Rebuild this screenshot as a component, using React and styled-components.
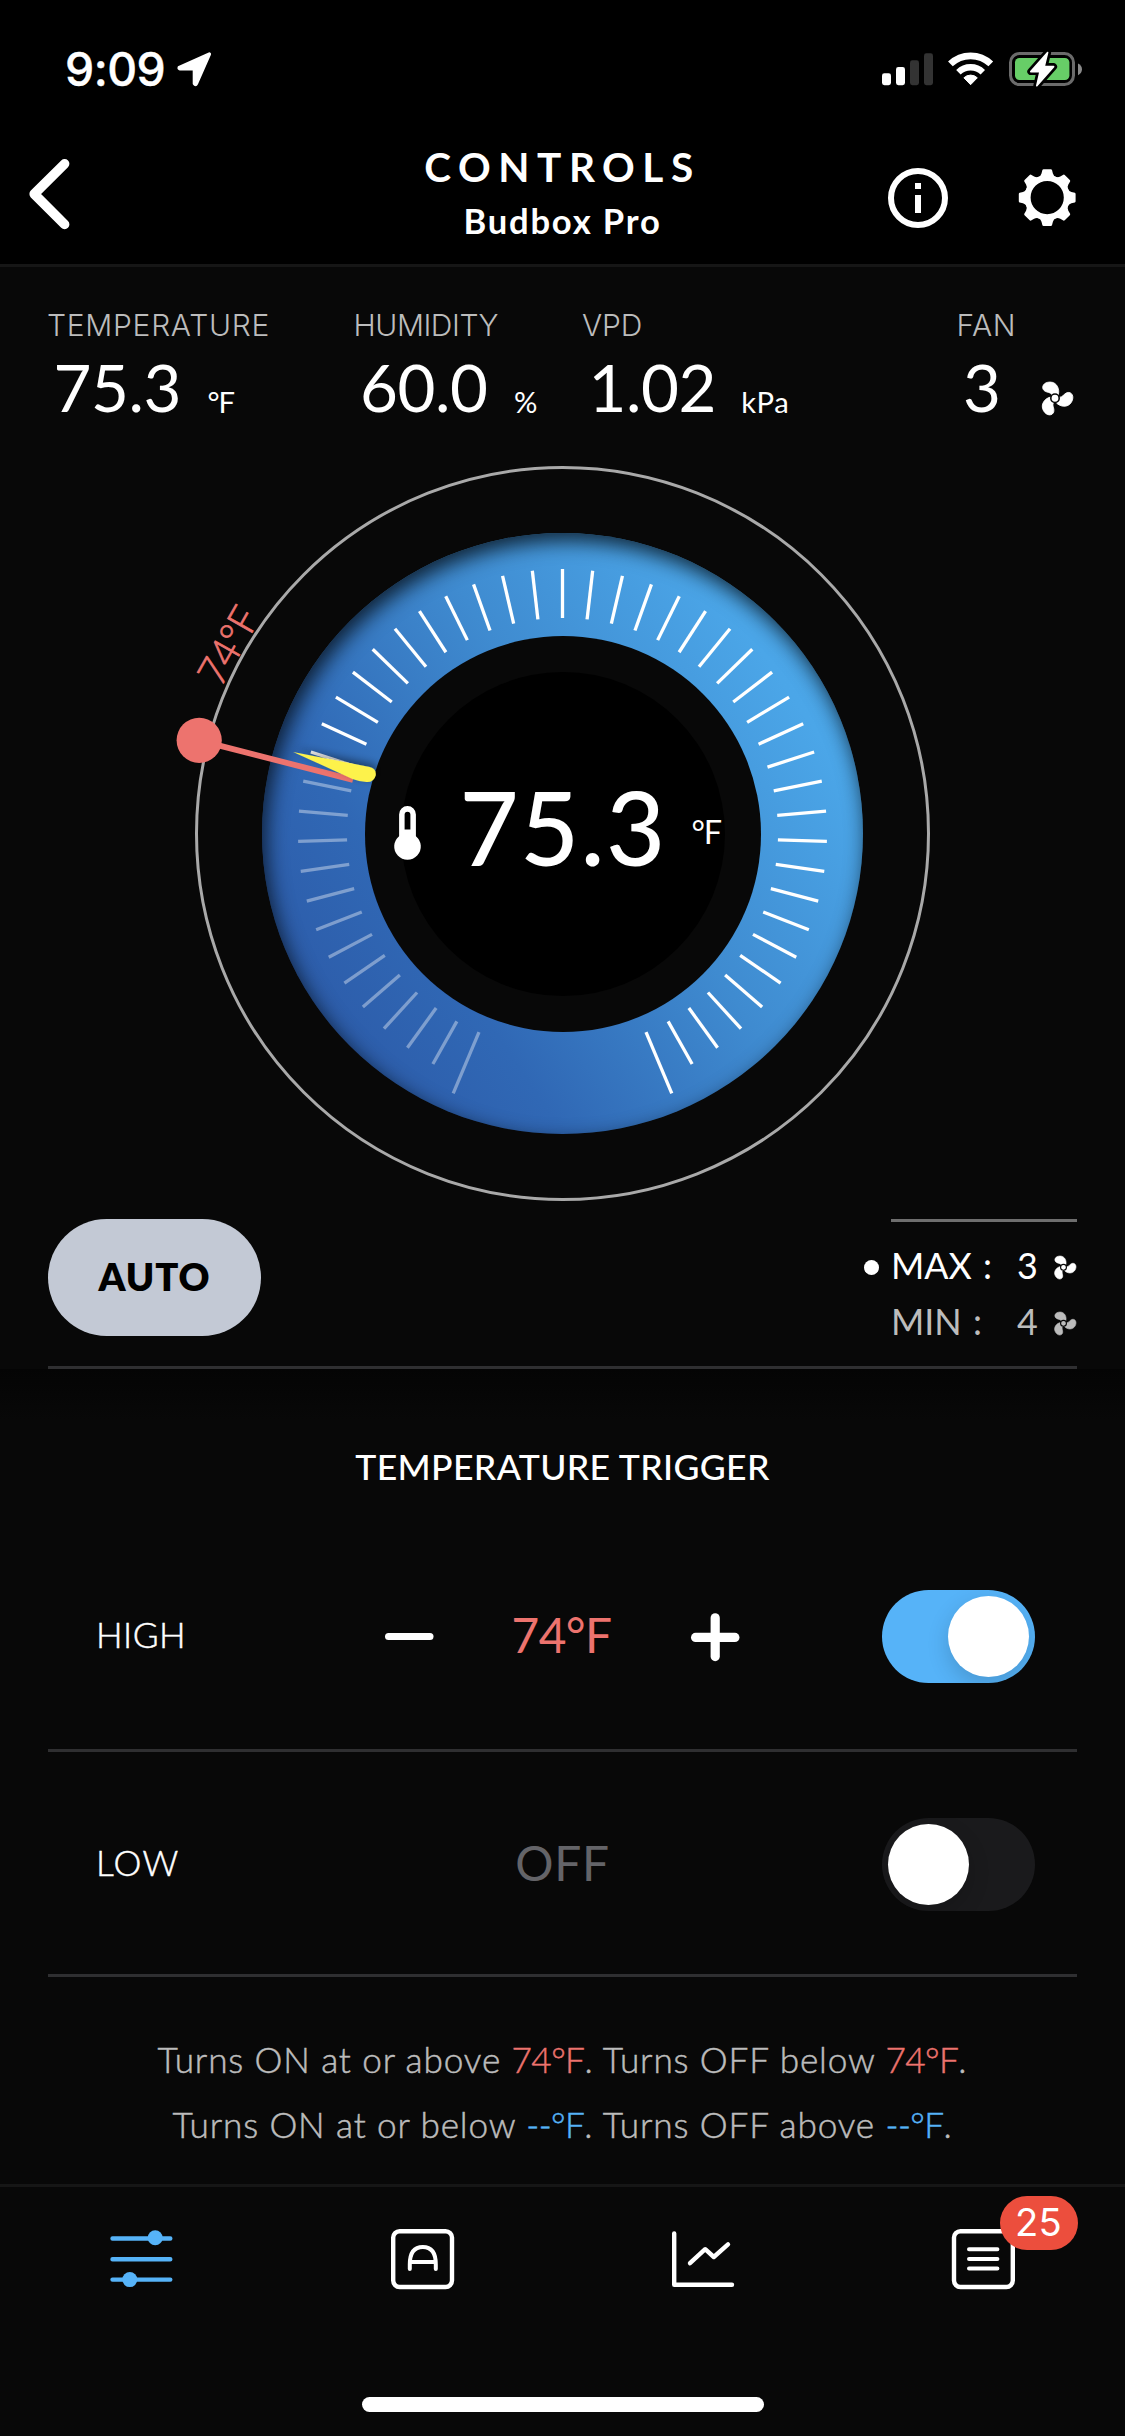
import React from 'react';
import styled, { createGlobalStyle } from 'styled-components';

const color = {
  page: '#080808',
  text: '#ffffff',
  muted: '#bcbcbc',
  dim: '#646468',
  line: '#2f2f31',
  hair: '#161616',
  blue: '#56b3f8',
  red: '#ed736e',
  yellow: '#fdf24b',
};

const GlobalStyle = createGlobalStyle`
  * { box-sizing: border-box; }
  body {
    margin: 0;
    background: ${color.page};
    color: ${color.text};
    font-family: Lato, "Liberation Sans", sans-serif;
  }
`;

const Screen = styled.div`
  width: 1125px;
  height: 2436px;
  display: flex;
  flex-direction: column;
  background: ${color.page};
  overflow: hidden;
  white-space: nowrap;
`;

const Svg = styled.svg`
  display: block;
  flex: none;
  overflow: visible;
`;

/* ---------- status bar ---------- */

const StatusBar = styled.div`
  height: 138px;
  flex: none;
  display: flex;
  align-items: center;
  padding: 0 43px 0 65px;
  background: #000;
`;

const Clock = styled.span`
  font: 500 46.3px/60px Inter, sans-serif;
  letter-spacing: -0.5px;
  margin-right: 11.5px;
  -webkit-text-stroke: 0.4px currentColor;
`;

const StatusIcons = styled.div`
  margin-left: auto;
  display: flex;
  align-items: center;
  gap: 15px;
`;

const LocationArrow = () => (
  <Svg width="35" height="36" viewBox="0 0 35 36">
    <path d="M32.4 3 L2.2 16.6 Q1.8 17.6 3 17.8 H17.4 V32.6 Q18.6 34.4 19.4 32.6 Z" fill="#fff" stroke="#fff" strokeWidth="3.4" strokeLinejoin="round" />
  </Svg>
);

const Signal = () => (
  <Svg width="51.5" height="34" viewBox="0 0 51.5 34">
    <rect x="0" y="21.2" width="9" height="12" rx="2.4" fill="#fff" />
    <rect x="14" y="15" width="9" height="18.2" rx="2.4" fill="#fff" />
    <rect x="28" y="8.3" width="9" height="24.9" rx="2.4" fill="#333" />
    <rect x="42" y="1.3" width="9" height="31.9" rx="2.4" fill="#333" />
  </Svg>
);

const Wifi = () => (
  <Svg width="46" height="34" viewBox="0 0 46 34">
    <path d="M2.4 11.9 A29.2 29.2 0 0 1 42.8 11.9" fill="none" stroke="#fff" strokeWidth="6.8" />
    <path d="M10.4 20.2 A17.6 17.6 0 0 1 34.8 20.2" fill="none" stroke="#fff" strokeWidth="6.4" />
    <path d="M22.6 32.7 L15.9 25.8 Q18.5 23.2 22.6 23.1 Q26.7 23.2 29.3 25.8 Z" fill="#fff" stroke="#fff" strokeWidth="1" strokeLinejoin="round" />
  </Svg>
);

const Battery = () => (
  <Svg width="73" height="36" viewBox="0 0 73 36">
    <rect x="1.5" y="2.5" width="63" height="31" rx="9" fill="none" stroke="#6b6b6b" strokeWidth="3" />
    <path d="M69 12.4 Q73 14.4 73 18.3 Q73 22.2 69 24.2 Z" fill="#8a8a8a" />
    <rect x="6" y="7" width="54.4" height="22" rx="4.5" fill="#67ce67" />
    <path d="M38.6 1.6 L21.8 20.6 H31 L27.8 34.8 L44.6 15.6 H35.2 Z" fill="#000" stroke="#000" strokeWidth="7" strokeLinejoin="round" />
    <path d="M38.6 1.6 L21.8 20.6 H31 L27.8 34.8 L44.6 15.6 H35.2 Z" fill="#fff" stroke="#fff" strokeWidth="1.6" strokeLinejoin="round" />
  </Svg>
);

/* ---------- header ---------- */

const Header = styled.header`
  height: 129px;
  flex: none;
  display: grid;
  grid-template-columns: 1fr auto 1fr;
  align-items: start;
  padding: 0 48px 0 28px;
  background: #000;
  border-bottom: 3px solid ${color.hair};
`;

const BackButton = styled.div`
  padding-top: 20px;
`;

const TitleBlock = styled.div`
  padding-top: 2px;
  margin-left: 20px;
  text-align: center;
`;

const Title = styled.h1`
  margin: 0;
  font-size: 40.5px;
  font-weight: 700;
  line-height: 54px;
  letter-spacing: 7.56px;
`;

const Subtitle = styled.div`
  font-size: 34.6px;
  font-weight: 700;
  line-height: 54px;
  letter-spacing: 1.8px;
`;

const HeaderActions = styled.div`
  display: flex;
  justify-content: flex-end;
  gap: 69px;
  padding-top: 30px;
`;

const Back = () => (
  <Svg width="44" height="72" viewBox="0 0 44 72">
    <path d="M36.6 5.8 L6.2 36 L36.6 66.4" fill="none" stroke="#fff" strokeWidth="9.6" strokeLinecap="round" strokeLinejoin="round" />
  </Svg>
);

const Info = () => (
  <Svg width="60" height="60" viewBox="0 0 60 60">
    <circle cx="30" cy="30" r="27" fill="none" stroke="#fff" strokeWidth="6" />
    <rect x="27" y="15" width="6" height="6" fill="#fff" />
    <rect x="27" y="27" width="6" height="18" fill="#fff" />
  </Svg>
);

const TOOTH = 'M-9 -20.4 Q-6.4 -21.6 -5.7 -24.2 L-4.8 -27.6 Q-4.5 -28.4 -3.6 -28.4 H3.6 Q4.5 -28.4 4.8 -27.6 L5.7 -24.2 Q6.4 -21.6 9 -20.4 Z';

const Gear = () => (
  <Svg width="60" height="60" viewBox="-30.2 -29.6 60 60">
    <circle r="19.6" fill="none" stroke="#fff" strokeWidth="6" />
    {[0, 45, 90, 135, 180, 225, 270, 315].map((a) => (
      <path key={a} d={TOOTH} transform={`rotate(${a})`} fill="#fff" />
    ))}
  </Svg>
);

/* ---------- metrics ---------- */

const BLADE = 'M18.2 12.9 C20 8 17.4 0 10 0 C3.6 0 .8 5.2 4 8.4 C6.8 11 10.6 9.6 12.4 13.4 Q15.4 11.2 18.2 12.9 Z';

const Fan = ({ size = 35, tint = '#fff' }) => (
  <Svg width={size} height={size * 0.95} viewBox="0 0 35 33.2">
    {[0, 120, 240].map((a) => (
      <path key={a} d={BLADE} transform={`rotate(${a} 15 16.2)`} fill={tint} stroke={tint} strokeWidth="0.8" />
    ))}
    <circle cx="15" cy="16.2" r="4.2" fill={tint} stroke={color.page} strokeWidth="1.6" />
  </Svg>
);

const Metrics = styled.section`
  height: 199px;
  flex: none;
  display: grid;
  grid-template-columns: 306.5px 228.5px 374.5px 1fr;
  padding: 38px 0 0 47px;
`;

const MetricLabel = styled.div`
  font: 300 30px/40px Inter, sans-serif;
  letter-spacing: ${(p) => p.$spacing}px;
  color: ${color.muted};
`;

const MetricReading = styled.div`
  display: flex;
  align-items: flex-start;
  gap: ${(p) => p.$gap}px;
  padding: 2px 0 0 6.5px;
`;

const MetricValue = styled.span`
  font-size: 65.4px;
  line-height: 80px;
  letter-spacing: -0.4px;
`;

const MetricUnit = styled.span`
  font-size: 29.2px;
  line-height: 110px;
  letter-spacing: ${(p) => p.$spacing}px;
`;

const MetricIcon = styled.span`
  padding-top: 35px;
`;

const METRICS = [
  { label: 'TEMPERATURE', value: '75.3', unit: '°F', spacing: 0.7, unitSpacing: -1.2, gap: 26.4 },
  { label: 'HUMIDITY', value: '60.0', unit: '%', spacing: -0.45, unitSpacing: 0, gap: 26.4 },
  { label: 'VPD', value: '1.02', unit: 'kPa', spacing: -0.2, unitSpacing: 0.6, gap: 25 },
  { label: 'FAN', value: '3', spacing: 0.6, gap: 39.5 },
];

/* ---------- dial ---------- */

const Dial = styled.section`
  width: 735px;
  height: 735px;
  flex: none;
  align-self: center;
  margin-bottom: 18px;
  display: grid;
  grid-template: 100% / 100%;
  place-items: center;
  border: 3px solid #a9a9a9;
  border-radius: 50%;
  & > * { grid-area: 1 / 1; }
`;

const Disc = styled.div`
  width: 601px;
  height: 601px;
  border-radius: 50%;
  background: linear-gradient(56deg, #2c59a7 8%, #3068b5 30%, #3f8bd0 56%, #4ba6e8 82%, #4dabed 100%);
  box-shadow: inset 4px 8px 20px rgba(4, 10, 16, 0.8);
`;

const Hole = styled.div`
  width: 396px;
  height: 396px;
  border-radius: 50%;
  background: ${color.page};
  display: grid;
  place-items: center;
`;

const Core = styled.div`
  width: 324px;
  height: 324px;
  border-radius: 50%;
  background: #000;
`;

const Readout = styled.div`
  display: flex;
  align-items: center;
  padding-right: 10px;
`;

const ReadoutIcon = styled.span`
  padding-bottom: 2px;
  margin-right: 38.5px;
`;

const ReadoutValue = styled.span`
  font-size: 102px;
  font-weight: 500;
  line-height: 120px;
  letter-spacing: 1.4px;
  padding-bottom: 14px;
  margin-right: 25px;
`;

const ReadoutUnit = styled.span`
  font-size: 32.4px;
  line-height: 60px;
  letter-spacing: -1.15px;
  padding-bottom: 4px;
`;

const DialLabel = styled.text`
  font: 300 40px Lato, sans-serif;
  letter-spacing: -1px;
  fill: ${color.red};
  stroke: ${color.red};
  stroke-width: 0.8px;
`;

const Thermometer = () => (
  <Svg width="27" height="54" viewBox="0 0 27 54">
    <path fillRule="evenodd" fill="#fff" d="M5.1 8.4 A8.4 8.4 0 0 1 21.9 8.4 V30.2 A13.3 13.3 0 1 1 5.1 30.2 Z M10.6 8.6 V23.4 H16.4 V8.6 A2.9 2.9 0 0 0 10.6 8.6 Z" />
  </Svg>
);

const TICK_STEP = 6.55;
const TICKS = Array.from({ length: 49 }, (_, i) => i - 24);
const LAST_DIM_TICK = -12;

const DialMarks = () => (
  <Svg width="729" height="729" viewBox="-364.5 -364.5 729 729">
    <defs>
      <filter id="needleShadow" x="-20%" y="-60%" width="140%" height="220%">
        <feDropShadow dx="2" dy="-3" stdDeviation="4" floodColor="#001" floodOpacity="0.45" />
      </filter>
    </defs>
    {TICKS.map((i) => (
      <line
        key={i}
        x1="0"
        x2="0"
        y1={-215.5}
        y2={Math.abs(i) === 24 ? -282 : -264.5}
        transform={`rotate(${i * TICK_STEP})`}
        stroke="#fff"
        strokeWidth="3.3"
        strokeOpacity={i <= LAST_DIM_TICK ? 0.38 : 1}
      />
    ))}
    <line x1="-345" y1="-88.4" x2="-209.5" y2="-53.6" stroke={color.red} strokeWidth="5.8" />
    <path
      d="M-269.4 -81.6 L-193 -66.6 Q-185.8 -64.8 -186.8 -58 Q-188.6 -51 -196 -51.4 Q-203 -52 -210 -54.6 Z"
      fill={color.yellow}
      filter="url(#needleShadow)"
    />
    <circle cx="-363.3" cy="-93.2" r="22.6" fill={color.red} />
    <DialLabel x="0" y="0" transform="translate(-342 -145) rotate(-60.5)">74°F</DialLabel>
  </Svg>
);

/* ---------- mode bar ---------- */

const ModeBar = styled.section`
  height: 150px;
  flex: none;
  margin: 0 48px;
  display: flex;
  justify-content: space-between;
  align-items: flex-start;
  border-bottom: 3px solid ${color.line};
`;

const ModeButton = styled.button`
  width: 213px;
  height: 117px;
  padding: 0 0 4px;
  border: 0;
  border-radius: 59px;
  background: #c3c9d5;
  color: #000;
  font: 800 38.1px/50px Lato, sans-serif;
  letter-spacing: 0.9px;
`;

const Limits = styled.div`
  width: 186px;
  padding-top: 16px;
  border-top: 3px solid #6e6e6e;
`;

const Limit = styled.div`
  display: flex;
  align-items: center;
  margin-left: -27px;
  font-size: 35.9px;
  line-height: 56px;
  color: ${(p) => (p.$active ? color.text : color.muted)};
`;

const LimitDot = styled.i`
  width: 15px;
  height: 15px;
  margin: 3px 12px 0 0;
  border-radius: 50%;
  background: ${(p) => (p.$active ? color.text : 'transparent')};
`;

const LimitName = styled.span`
  width: 126px;
  word-spacing: 2px;
`;

const LimitValue = styled.span`
  width: 35.5px;
`;

const LimitIcon = styled.span`
  padding-top: 3px;
`;

/* ---------- trigger ---------- */

const Trigger = styled.section`
  flex: none;
  padding: 68px 48px 0;
  background: linear-gradient(#040404, ${color.page} 50px);
`;

const SectionTitle = styled.h2`
  margin: 0;
  text-align: center;
  font-size: 35.6px;
  font-weight: 500;
  line-height: 60px;
  letter-spacing: 0.36px;
`;

const TriggerRow = styled.div`
  height: ${(p) => p.$height}px;
  padding: ${(p) => p.$top}px 42px 0 48px;
  display: grid;
  grid-template-columns: 289px 355px 1fr;
  align-items: center;
  border-bottom: 3px solid ${color.line};
`;

const RowLabel = styled.span`
  font-size: 35.2px;
  font-weight: 300;
  line-height: 50px;
  letter-spacing: ${(p) => p.$spacing}px;
  padding-bottom: 5px;
  -webkit-text-stroke: 0.5px currentColor;
`;

const Stepper = styled.div`
  display: flex;
  align-items: center;
  justify-content: ${(p) => (p.$solo ? 'center' : 'space-between')};
`;

const StepValue = styled.span`
  font-size: 47.8px;
  line-height: 60px;
  letter-spacing: ${(p) => (p.$off ? 0.7 : -0.6)}px;
  color: ${(p) => (p.$off ? color.dim : color.red)};
  padding-bottom: 3px;
  margin-right: ${(p) => (p.$off ? 0 : 2)}px;
`;

const Switch = styled.div`
  width: 153px;
  height: 93px;
  justify-self: end;
  display: flex;
  align-items: center;
  justify-content: ${(p) => (p.$on ? 'flex-end' : 'flex-start')};
  padding: 6px;
  border-radius: 47px;
  overflow: hidden;
  background: ${(p) => (p.$on ? color.blue : '#1a1a1c')};
`;

const Knob = styled.div`
  width: 81px;
  height: 81px;
  border-radius: 50%;
  background: #fff;
  box-shadow: 0 8px 22px rgba(0, 0, 0, 0.16);
`;

const Minus = () => (
  <Svg width="48.5" height="50" viewBox="0 0 48.5 50">
    <rect x="0" y="21" width="48.5" height="7" rx="3.5" fill="#fff" />
  </Svg>
);

const Plus = () => (
  <Svg width="48.5" height="50" viewBox="0 0 48.5 50">
    <rect x="0" y="20.8" width="48.5" height="9.2" rx="4.6" fill="#fff" />
    <rect x="19.6" y="1.2" width="9.2" height="48" rx="4.6" fill="#fff" />
  </Svg>
);

const Summary = styled.div`
  height: 207px;
  flex: none;
  padding-top: 50px;
  text-align: center;
  font-size: 35.2px;
  font-weight: 300;
  line-height: 65px;
  letter-spacing: 0.86px;
  color: ${color.muted};
  -webkit-text-stroke: 0.5px currentColor;
`;

const Accent = styled.span`
  color: ${(p) => p.$tint};
  letter-spacing: -0.6px;
`;

/* ---------- tab bar ---------- */

const TabBar = styled.nav`
  height: 147px;
  flex: none;
  display: grid;
  grid-template-columns: repeat(4, 1fr);
  place-items: center;
  border-top: 3px solid ${color.hair};
`;

const Tab = styled.div`
  position: relative;
  width: 64px;
  height: 64px;
`;

const Badge = styled.span`
  position: absolute;
  left: 48px;
  top: -31px;
  width: 78px;
  height: 54px;
  padding-right: 2px;
  border-radius: 27px;
  background: #ec4e3d;
  text-align: center;
  font: 400 38.2px/53px Inter, sans-serif;
`;

const HomeIndicator = styled.div`
  width: 402px;
  height: 15px;
  flex: none;
  align-self: center;
  margin-top: 66px;
  border-radius: 8px;
  background: #fff;
`;

const TabIcon = ({ children, tint = '#fff' }) => (
  <Svg width="64" height="64" viewBox="0 0 64 64" fill="none" stroke={tint} strokeWidth="4.4" strokeLinecap="round" strokeLinejoin="round">
    {children}
  </Svg>
);

const ControlsIcon = () => (
  <TabIcon tint={color.blue}>
    <path d="M3.5 11.5 H61.3 M3.5 32.2 H61.3 M3.5 52.6 H61.3" />
    <circle cx="46.2" cy="10.8" r="7.5" fill={color.blue} stroke="none" />
    <circle cx="20.8" cy="52.6" r="7.5" fill={color.blue} stroke="none" />
  </TabIcon>
);

const AutomationIcon = () => (
  <TabIcon>
    <rect x="3.2" y="4.2" width="58.8" height="55.8" rx="6.4" />
    <path d="M19.8 42 V37.4 Q19.8 20 32.8 20 Q45.8 20 45.8 37.4 V42 M19.8 34.9 H45.8" strokeWidth="4" />
  </TabIcon>
);

const ChartIcon = () => (
  <TabIcon>
    <path d="M3.2 6.4 V57.8 H61" />
    <path d="M19 36.2 L34.2 22.2 L42.8 30 L57 17.4" />
  </TabIcon>
);

const LogIcon = () => (
  <TabIcon>
    <rect x="2" y="4.2" width="58.8" height="55.8" rx="6.4" />
    <path d="M17 22.3 H45.4 M17 32 H45.4 M17 41.4 H45.4" strokeWidth="4" />
  </TabIcon>
);

export default function App() {
  return (
    <Screen>
      <GlobalStyle />
      <StatusBar>
        <Clock>9:09</Clock>
        <LocationArrow />
        <StatusIcons>
          <Signal />
          <Wifi />
          <Battery />
        </StatusIcons>
      </StatusBar>

      <Header>
        <BackButton><Back /></BackButton>
        <TitleBlock>
          <Title>CONTROLS</Title>
          <Subtitle>Budbox Pro</Subtitle>
        </TitleBlock>
        <HeaderActions>
          <Info />
          <Gear />
        </HeaderActions>
      </Header>

      <Metrics>
        {METRICS.map((m) => (
          <div key={m.label}>
            <MetricLabel $spacing={m.spacing}>{m.label}</MetricLabel>
            <MetricReading $gap={m.gap}>
              <MetricValue>{m.value}</MetricValue>
              {m.unit ? (
                <MetricUnit $spacing={m.unitSpacing}>{m.unit}</MetricUnit>
              ) : (
                <MetricIcon><Fan /></MetricIcon>
              )}
            </MetricReading>
          </div>
        ))}
      </Metrics>

      <Dial>
        <Disc />
        <Hole><Core /></Hole>
        <DialMarks />
        <Readout>
          <ReadoutIcon><Thermometer /></ReadoutIcon>
          <ReadoutValue>75.3</ReadoutValue>
          <ReadoutUnit>°F</ReadoutUnit>
        </Readout>
      </Dial>

      <ModeBar>
        <ModeButton>AUTO</ModeButton>
        <Limits>
          <Limit $active>
            <LimitDot $active />
            <LimitName>MAX :</LimitName>
            <LimitValue>3</LimitValue>
            <LimitIcon><Fan size={24.5} /></LimitIcon>
          </Limit>
          <Limit>
            <LimitDot />
            <LimitName>MIN :</LimitName>
            <LimitValue>4</LimitValue>
            <LimitIcon><Fan size={24.5} tint={color.muted} /></LimitIcon>
          </Limit>
        </Limits>
      </ModeBar>

      <Trigger>
        <SectionTitle>TEMPERATURE TRIGGER</SectionTitle>
        <TriggerRow $height={255} $top={27}>
          <RowLabel $spacing={0.5}>HIGH</RowLabel>
          <Stepper>
            <Minus />
            <StepValue>74°F</StepValue>
            <Plus />
          </Stepper>
          <Switch $on><Knob /></Switch>
        </TriggerRow>
        <TriggerRow $height={225} $top={3}>
          <RowLabel $spacing={1.3}>LOW</RowLabel>
          <Stepper $solo>
            <StepValue $off>OFF</StepValue>
          </Stepper>
          <Switch><Knob /></Switch>
        </TriggerRow>
      </Trigger>

      <Summary>
        <div>
          Turns ON at or above <Accent $tint={color.red}>74°F</Accent>. Turns OFF below <Accent $tint={color.red}>74°F</Accent>.
        </div>
        <div>
          Turns ON at or below <Accent $tint={color.blue}>--°F</Accent>. Turns OFF above <Accent $tint={color.blue}>--°F</Accent>.
        </div>
      </Summary>

      <TabBar>
        <Tab><ControlsIcon /></Tab>
        <Tab><AutomationIcon /></Tab>
        <Tab><ChartIcon /></Tab>
        <Tab><LogIcon /><Badge>25</Badge></Tab>
      </TabBar>
      <HomeIndicator />
    </Screen>
  );
}
